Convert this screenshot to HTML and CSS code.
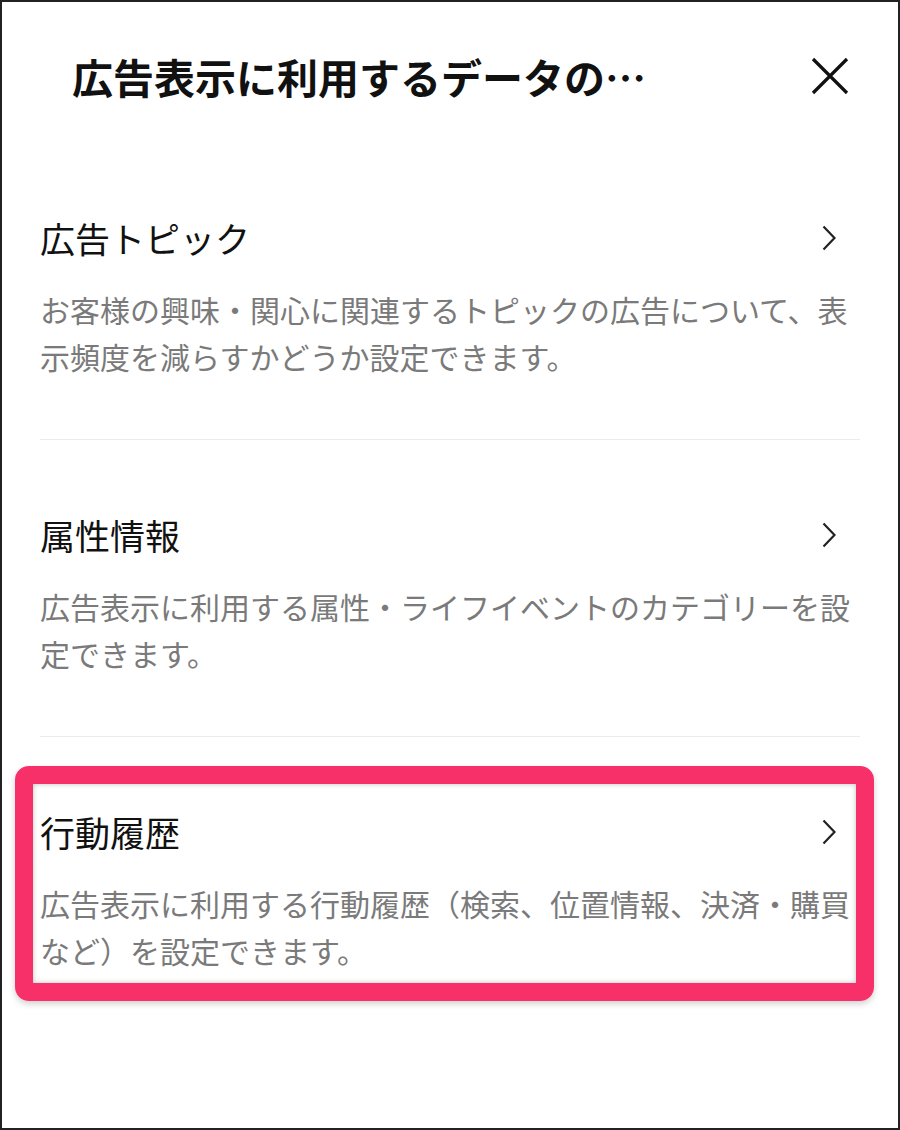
FILE: index.html
```html
<!DOCTYPE html>
<html lang="ja">
<head>
    <meta charset="UTF-8">
    <meta name="viewport" content="width=device-width, initial-scale=1.0">
    <title>広告表示に利用するデータの管理</title>
    <link rel="stylesheet" href="styles.css">
</head>
<body>
    <div class="screen">
        <header class="header">
            <h1 class="header-title">広告表示に利用するデータの…</h1>
            <button type="button" class="close-button" aria-label="閉じる">
                <svg width="38" height="38" viewBox="0 0 38 38">
                    <path d="M2 2 L36 36 M36 2 L2 36" stroke="#111" stroke-width="3.2" fill="none"/>
                </svg>
            </button>
        </header>

        <main class="list">
            <!-- Ad topics -->
            <section class="item">
                <div class="item-head">
                    <h2 class="item-title">広告トピック</h2>
                    <svg class="chevron" width="14" height="26" viewBox="0 0 14 26">
                        <polyline points="1.5,1.5 12.5,13 1.5,24.5" stroke="#222" stroke-width="2.2" fill="none"/>
                    </svg>
                </div>
                <p class="item-desc">お客様の興味・関心に関連するトピックの広告について、表示頻度を減らすかどうか設定できます。</p>
            </section>

            <!-- Attributes -->
            <section class="item">
                <div class="item-head">
                    <h2 class="item-title">属性情報</h2>
                    <svg class="chevron" width="14" height="26" viewBox="0 0 14 26">
                        <polyline points="1.5,1.5 12.5,13 1.5,24.5" stroke="#222" stroke-width="2.2" fill="none"/>
                    </svg>
                </div>
                <p class="item-desc">広告表示に利用する属性・ライフイベントのカテゴリーを設定できます。</p>
            </section>

            <!-- Activity history -->
            <section class="item item-last">
                <div class="highlight-box"></div>
                <div class="item-head">
                    <h2 class="item-title">行動履歴</h2>
                    <svg class="chevron" width="14" height="26" viewBox="0 0 14 26">
                        <polyline points="1.5,1.5 12.5,13 1.5,24.5" stroke="#222" stroke-width="2.2" fill="none"/>
                    </svg>
                </div>
                <p class="item-desc">広告表示に利用する行動履歴（検索、位置情報、決済・購買など）を設定できます。</p>
            </section>
        </main>
    </div>
</body>
</html>
```

FILE: styles.css
```css
* {
    box-sizing: border-box;
}

body {
    margin: 0;
    padding: 0;
    background-color: #fff;
    font-family: "Noto Sans CJK JP", "Noto Sans", sans-serif;
    color: #111;
}

.screen {
    width: 900px;
    height: 1130px;
    border: 2px solid #222;
    background-color: #fff;
    overflow: hidden;
}

.header {
    height: 141px;
    padding: 6px 49px 0 70px;
    display: flex;
    align-items: center;
    justify-content: space-between;
}

.header-title {
    margin: 0;
    font-size: 41px;
    font-weight: bold;
    line-height: 56px;
    white-space: nowrap;
}

.close-button {
    border: none;
    background: none;
    padding: 0;
    width: 38px;
    height: 38px;
    cursor: pointer;
}

.close-button svg {
    display: block;
}

.list {
    margin: 0 38px;
}

.item {
    position: relative;
    padding: 75px 0 59px;
    border-bottom: 1px solid #ebebeb;
}

.item-last {
    border-bottom: none;
}

.item-head {
    display: flex;
    align-items: center;
    justify-content: space-between;
    padding-right: 24px;
}

.item-title {
    margin: 0;
    font-size: 35px;
    font-weight: normal;
    line-height: 40px;
    color: #111;
}

.chevron {
    display: block;
}

.item-desc {
    margin: 28px 0 0;
    font-size: 30px;
    line-height: 47px;
    color: #7a7a7a;
}

/* annotation frame drawn over the last row */
.highlight-box {
    position: absolute;
    top: 29px;
    left: -25px;
    width: 859px;
    height: 235px;
    border: 18px solid #f8306a;
    border-radius: 14px;
    box-shadow: 0 3px 6px rgba(0,0,0,0.18), inset 0 0 5px rgba(0,0,0,0.25);
    pointer-events: none;
}
```
